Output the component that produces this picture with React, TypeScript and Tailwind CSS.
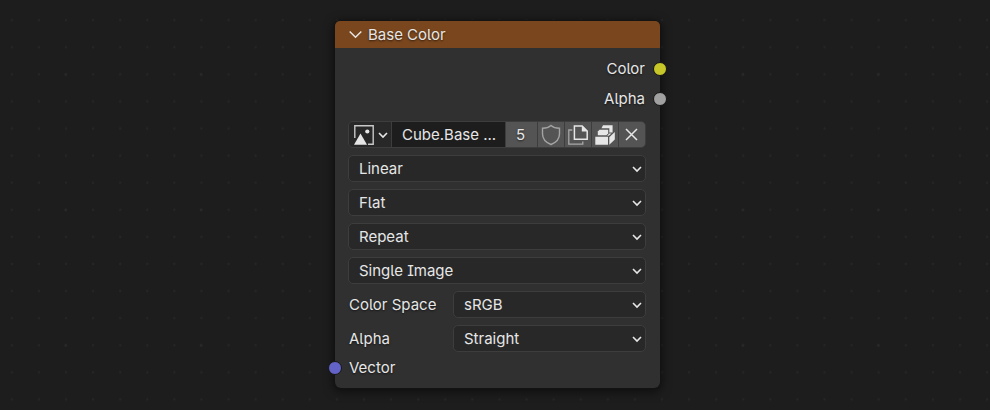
import type { ReactNode } from 'react';

const shadowText = '[text-shadow:0_1px_2px_rgba(0,0,0,0.6)]';

function Chevron({ className = '' }: { className?: string }) {
  return (
    <svg className={className} width="10" height="8" viewBox="0 0 10 8" fill="none" stroke="#e6e6e6" strokeWidth="1.6">
      <path d="M1 2l4 4 4-4" />
    </svg>
  );
}

function Dropdown({ value, className = '' }: { value: string; className?: string }) {
  return (
    <div className={`flex h-[27px] items-center justify-between rounded-[5px] border border-[#3d3d3d] bg-[#282828] pl-[10px] pr-[3px] ${className}`}>
      <span>{value}</span>
      <Chevron />
    </div>
  );
}

function Socket({ className }: { className: string }) {
  return <span className={`absolute size-[14px] rounded-full border border-[#161616] ${className}`} />;
}

function Cell({ children, className }: { children: ReactNode; className: string }) {
  return <div className={`ml-px flex h-full shrink-0 items-center justify-center bg-[#545454] ${className}`}>{children}</div>;
}

function ImagePicker() {
  return (
    <div className="flex h-[27px] overflow-hidden rounded-[5px] border border-[#3d3d3d] bg-[#3d3d3d]">
      <div className="flex w-[42px] shrink-0 items-center bg-[#282828] pl-1">
        <svg width="22" height="22" viewBox="0 0 22 22">
          <path d="M1.800 14V1.800h18.400v18.400H15" fill="none" stroke="#c8c8c8" strokeWidth="1.400" />
          <path d="M1 20.800L7.500 9.500l6.500 11.300z" fill="#e6e6e6" />
          <circle cx="14.300" cy="7.500" r="2.100" fill="#e6e6e6" />
        </svg>
        <Chevron className="ml-[3px]" />
      </div>
      <div className="ml-px flex w-[113px] shrink-0 items-center bg-[#1d1d1d] pl-[10px] whitespace-nowrap">Cube.Base ...</div>
      <Cell className={`w-[31px] pr-[2px] ${shadowText}`}>5</Cell>
      <Cell className="w-[26px] pr-px">
        <svg width="20" height="22" viewBox="0 0 20 22" fill="none" stroke="#a3a3a3" strokeWidth="1.400">
          <path d="M10 1.500C8 3.300 5 4.200 1.500 4.200v5.500C1.500 15 5 18.500 10 20.500c5-2 8.500-5.500 8.500-10.800V4.200C15 4.200 12 3.300 10 1.500z" />
        </svg>
      </Cell>
      <Cell className="w-[26px]">
        <svg width="20" height="20" viewBox="0 0 20 20" fill="none">
          <path d="M4.300 5H.8v14.200h14V16.500" stroke="#a8a8a8" strokeWidth="1.300" />
          <path d="M6.400 1h7.800l5 5v8.200H6.400z" stroke="#e6e6e6" strokeWidth="1.500" />
          <path d="M13.800 1v5.500h5.700z" fill="#e6e6e6" />
        </svg>
      </Cell>
      <Cell className="w-[26px]">
        <svg width="20" height="20" viewBox="0 0 20 20" fill="#e6e6e6">
          <path d="M8 .3h9.600v7.200h-3.300V3.300H6.500z" />
          <path d="M4.500 4.700h8.700v3.600l-1.700 2H2.800V6.500z" />
          <path d="M.3 11.700h12.700v8H.3z" />
          <path d="M14.300 12.200l5.500-5.200v7.500l-5.500 5.200z" />
          <path d="M14.300 8.500h2.200l-2.800 2.300h-1.500z" />
        </svg>
      </Cell>
      <Cell className="w-[26px] pr-px">
        <svg width="13" height="13" viewBox="0 0 13 13" stroke="#e6e6e6" strokeWidth="1.500">
          <path d="M1 1l11 11M12 1L1 12" />
        </svg>
      </Cell>
    </div>
  );
}

function Grid() {
  return (
    <svg className="absolute inset-0" width="990" height="410">
      <defs>
        <pattern id="minor" x="-1.750" y="6.650" width="27.090" height="27.090" patternUnits="userSpaceOnUse">
          <circle cx="13.545" cy="13.545" r="1.100" fill="#262626" />
        </pattern>
        <pattern id="major" x="-2.200" y="6.800" width="135.450" height="135.450" patternUnits="userSpaceOnUse">
          <circle cx="67.725" cy="67.725" r="1.200" fill="#292929" />
        </pattern>
      </defs>
      <rect width="990" height="410" fill="url(#minor)" />
      <rect width="990" height="410" fill="url(#major)" />
    </svg>
  );
}

export default function App() {
  return (
    <div className="relative h-[410px] w-[990px] overflow-hidden bg-[#1d1d1d] font-['Inter',sans-serif] text-[15px] leading-[20px] text-[#e6e6e6] [font-feature-settings:'cv05','cv08']">
      <Grid />
      <section className="absolute left-[335px] top-[21px] flex h-[367px] w-[325px] flex-col rounded-[6px] bg-[#303030] shadow-[0_0_1px_1px_#141414,0_2px_10px_2px_rgba(0,0,0,0.5)]">
        <header className={`flex h-[27px] items-center rounded-t-[5px] bg-[#79461d] pl-[14px] ${shadowText}`}>
          <svg width="13" height="9" viewBox="0 0 13 9" fill="none" stroke="#e6e6e6" strokeWidth="1.500">
            <path d="M.7 1.500l5.800 5.800 5.800-5.800" />
          </svg>
          <h1 className="ml-[6px]">Base Color</h1>
        </header>
        <div className={`relative mt-[6px] flex h-[30px] items-center justify-end pr-[15px] ${shadowText}`}>
          Color
          <Socket className="-right-[7px] top-2 bg-[#c7c729]" />
        </div>
        <div className={`relative flex h-[30px] items-center justify-end pr-[15px] ${shadowText}`}>
          Alpha
          <Socket className="-right-[7px] top-2 bg-[#a1a1a1]" />
        </div>
        <div className="ml-[13px] mr-[14px] mt-[7px] flex flex-col gap-[7px]">
          <ImagePicker />
          <Dropdown value="Linear" />
          <Dropdown value="Flat" />
          <Dropdown value="Repeat" />
          <Dropdown value="Single Image" />
          <div className="flex items-center justify-between pl-px">
            <span className={shadowText}>Color Space</span>
            <Dropdown value="sRGB" className="w-[193px]" />
          </div>
          <div className="flex items-center justify-between pl-px">
            <span className={shadowText}>Alpha</span>
            <Dropdown value="Straight" className="w-[193px]" />
          </div>
        </div>
        <div className={`relative mt-px flex h-[30px] items-center pl-[14px] ${shadowText}`}>
          <Socket className="-left-[7px] top-2 bg-[#6363c7]" />
          Vector
        </div>
      </section>
    </div>
  );
}
